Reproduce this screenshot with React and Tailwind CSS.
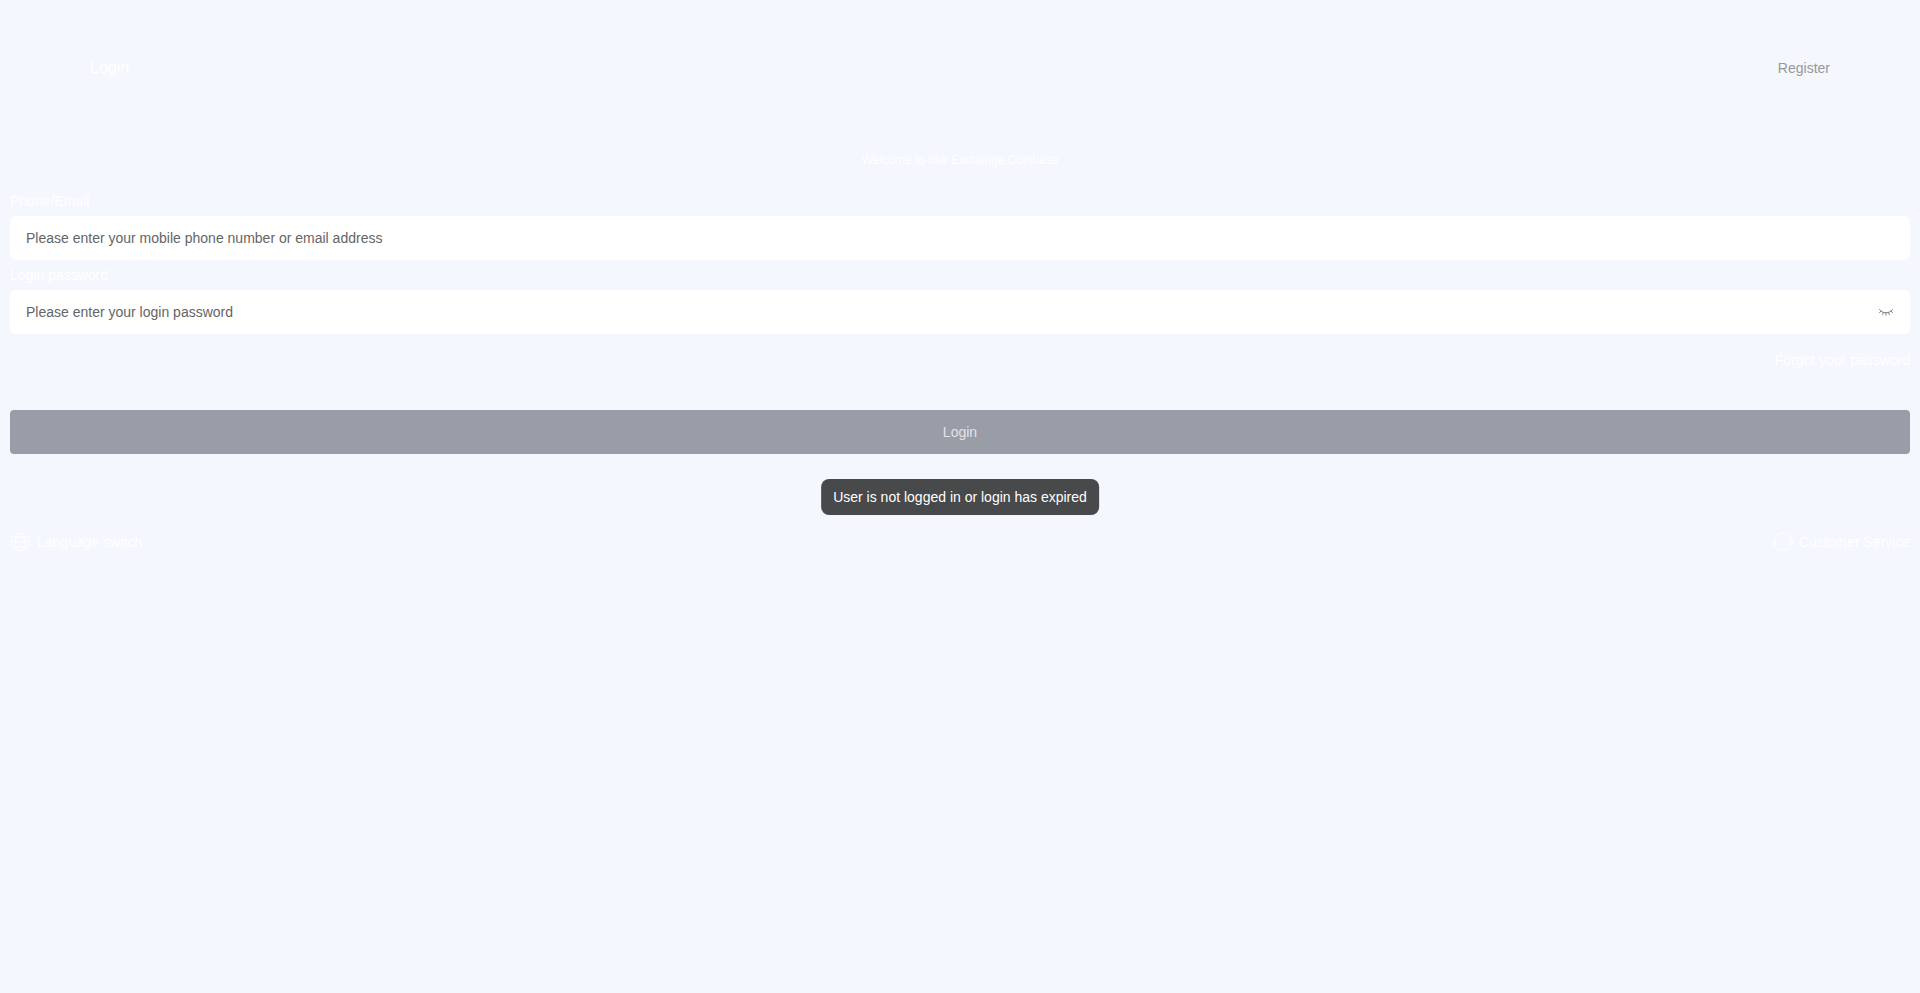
import { useState } from "react";

function ClosedEyeIcon() {
  return (
    <svg width="16" height="16" viewBox="0 0 16 16" fill="none" stroke="currentColor" strokeLinecap="round">
      <path d="M1.5 5.500c1.600 2.200 3.800 3.200 6.500 3.200s4.900-1 6.500-3.200M3 7.200 1.500 8.600M5.400 8.500l-.8 2.100M8 8.800v2.400M10.600 8.500l.8 2.100M13 7.200l1.500 1.400" />
    </svg>
  );
}

function LanguageIcon() {
  return (
    <svg width="22" height="22" viewBox="0 0 22 22" fill="none" stroke="currentColor">
      <circle cx="10" cy="11" r="9" />
      <path d="M3 6h14M1 11h18M3 16h14" />
      <ellipse cx="10" cy="11" rx="4.500" ry="9" />
    </svg>
  );
}

function ServiceIcon() {
  return (
    <svg width="22" height="22" viewBox="0 0 22 22" fill="none" stroke="currentColor">
      <path d="M3 10a8 8 0 0 1 16 0M3 9v5H1.500V9zM19 9v5h1.500V9zM3 14c1 3 3 5 7 5M19 14c0 3-2 5-6 5h-3" />
    </svg>
  );
}

const fields = [
  {
    id: "account",
    label: "Phone/Email",
    type: "text",
    placeholder: "Please enter your mobile phone number or email address",
  },
  {
    id: "password",
    label: "Login password",
    type: "password",
    placeholder: "Please enter your login password",
  },
];

export default function App() {
  const [values, setValues] = useState({ account: "", password: "" });
  const [visible, setVisible] = useState(false);

  const handleChange = (e) => setValues({ ...values, [e.target.id]: e.target.value });

  return (
    <div className="min-h-screen bg-[#f4f7fe] font-['Liberation_Sans',Arial,sans-serif] text-sm text-white">
      <nav className="flex justify-between px-[90px] pt-14">
        <a href="#login" className="text-base leading-6">Login</a>
        <a href="#register" className="leading-6 text-[#969799]">Register</a>
      </nav>

      <main className="px-[10px] pt-[68px]">
        <h1 className="text-center text-xs leading-6">Welcome to use Exchange Coinbase</h1>

        <form className="pt-[14px]" onSubmit={(e) => e.preventDefault()}>
          {fields.map((field) => (
            <div key={field.id}>
              <label htmlFor={field.id} className="block py-[3px] leading-6">
                {field.label}
              </label>
              <div className="flex h-11 items-center rounded-md bg-white px-4">
                <input
                  id={field.id}
                  type={field.type === "password" && visible ? "text" : field.type}
                  value={values[field.id]}
                  onChange={handleChange}
                  placeholder={field.placeholder}
                  className="min-w-0 flex-1 text-[#323233] outline-none placeholder:text-[#646566]"
                />
                {field.type === "password" && (
                  <button
                    type="button"
                    aria-label="Toggle password"
                    className="text-[#808080]"
                    onClick={() => setVisible(!visible)}
                  >
                    <ClosedEyeIcon />
                  </button>
                )}
              </div>
            </div>
          ))}

          <div className="flex justify-end pt-[14px]">
            <a href="#forgot" className="leading-6">Forgot your password</a>
          </div>

          <button
            type="submit"
            className="mt-[38px] block h-11 w-full rounded-sm bg-[#999da8] text-[#e2e4e8]"
          >
            Login
          </button>
        </form>

        <div className="flex justify-between pt-[76px]">
          <button type="button" className="flex items-center gap-[5px] leading-6">
            <LanguageIcon />
            Language switch
          </button>
          <button type="button" className="flex items-center gap-[5px] leading-6">
            <ServiceIcon />
            Customer Service
          </button>
        </div>
      </main>

      <div
        role="status"
        className="fixed top-1/2 left-1/2 -translate-x-1/2 -translate-y-1/2 rounded-lg bg-[#48494b] px-3 py-2 leading-5"
      >
        User is not logged in or login has expired
      </div>
    </div>
  );
}
